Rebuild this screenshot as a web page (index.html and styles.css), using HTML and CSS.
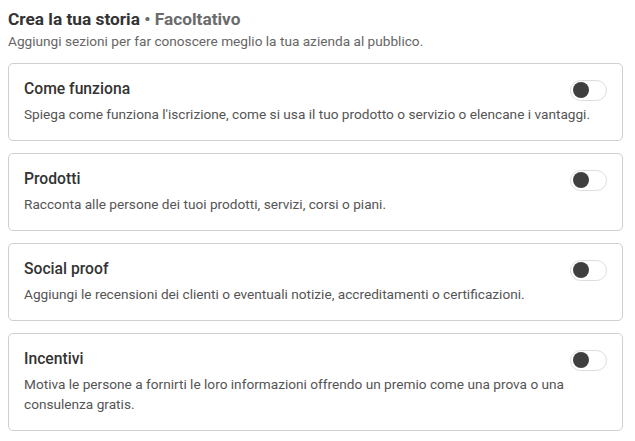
FILE: index.html
```html
<!DOCTYPE html>
<html lang="it">
<head>
<meta charset="utf-8">
<link rel="stylesheet" href="styles.css">
</head>
<body>
<div class="page">
  <header class="head">
    <h1 class="title">Crea la tua storia <span class="opt">• Facoltativo</span></h1>
    <p class="sub">Aggiungi sezioni per far conoscere meglio la tua azienda al pubblico.</p>
  </header>
  <div class="list">
    <section class="card">
      <div class="row">
        <h2 class="ctitle">Come funziona</h2>
        <span class="toggle"><span class="knob"></span></span>
      </div>
      <p class="desc">Spiega come funziona l'iscrizione, come si usa il tuo prodotto o servizio o elencane i vantaggi.</p>
    </section>
    <section class="card">
      <div class="row">
        <h2 class="ctitle">Prodotti</h2>
        <span class="toggle"><span class="knob"></span></span>
      </div>
      <p class="desc">Racconta alle persone dei tuoi prodotti, servizi, corsi o piani.</p>
    </section>
    <section class="card">
      <div class="row">
        <h2 class="ctitle">Social proof</h2>
        <span class="toggle"><span class="knob"></span></span>
      </div>
      <p class="desc">Aggiungi le recensioni dei clienti o eventuali notizie, accreditamenti o certificazioni.</p>
    </section>
    <section class="card">
      <div class="row">
        <h2 class="ctitle">Incentivi</h2>
        <span class="toggle"><span class="knob"></span></span>
      </div>
      <p class="desc">Motiva le persone a fornirti le loro informazioni offrendo un premio come una prova o una consulenza gratis.</p>
    </section>
  </div>
</div>
</body>
</html>
```

FILE: styles.css
```css
html, body {
  margin: 0;
  padding: 0;
  background: #ffffff;
}
body {
  font-family: Roboto, "Liberation Sans", Arial, sans-serif;
  color: #333333;
}
.page {
  padding: 8px 12px 0 8px;
}
.head {
  margin-bottom: 11px;
}
.title {
  margin: 0;
  font-size: 17.3px;
  line-height: 22px;
  font-weight: 700;
  color: #333333;
}
.opt {
  color: #6b6b6b;
}
.sub {
  margin: 0;
  font-size: 13.65px;
  line-height: 22px;
  color: #666666;
}
.list {
  display: flex;
  flex-direction: column;
  gap: 12px;
}
.card {
  border: 1px solid #cfcfcf;
  border-radius: 5px;
  padding: 14px 15px 16px 15px;
}
.row {
  display: flex;
  align-items: center;
  justify-content: space-between;
  height: 22px;
  margin-bottom: 4px;
}
.ctitle {
  margin: 0;
  font-size: 15.7px;
  line-height: 22px;
  font-weight: 500;
  color: #333333;
}
.desc {
  margin: 0;
  font-size: 13.65px;
  line-height: 20px;
  color: #555555;
}
.toggle {
  box-sizing: border-box;
  width: 37px;
  height: 21px;
  border: 1px solid #dddddd;
  border-radius: 11px;
  background: #ffffff;
  display: flex;
  align-items: center;
  padding-left: 2px;
  margin-top: 2px;
}
.knob {
  width: 16px;
  height: 16px;
  border-radius: 50%;
  background: #3f3f3f;
}
```
